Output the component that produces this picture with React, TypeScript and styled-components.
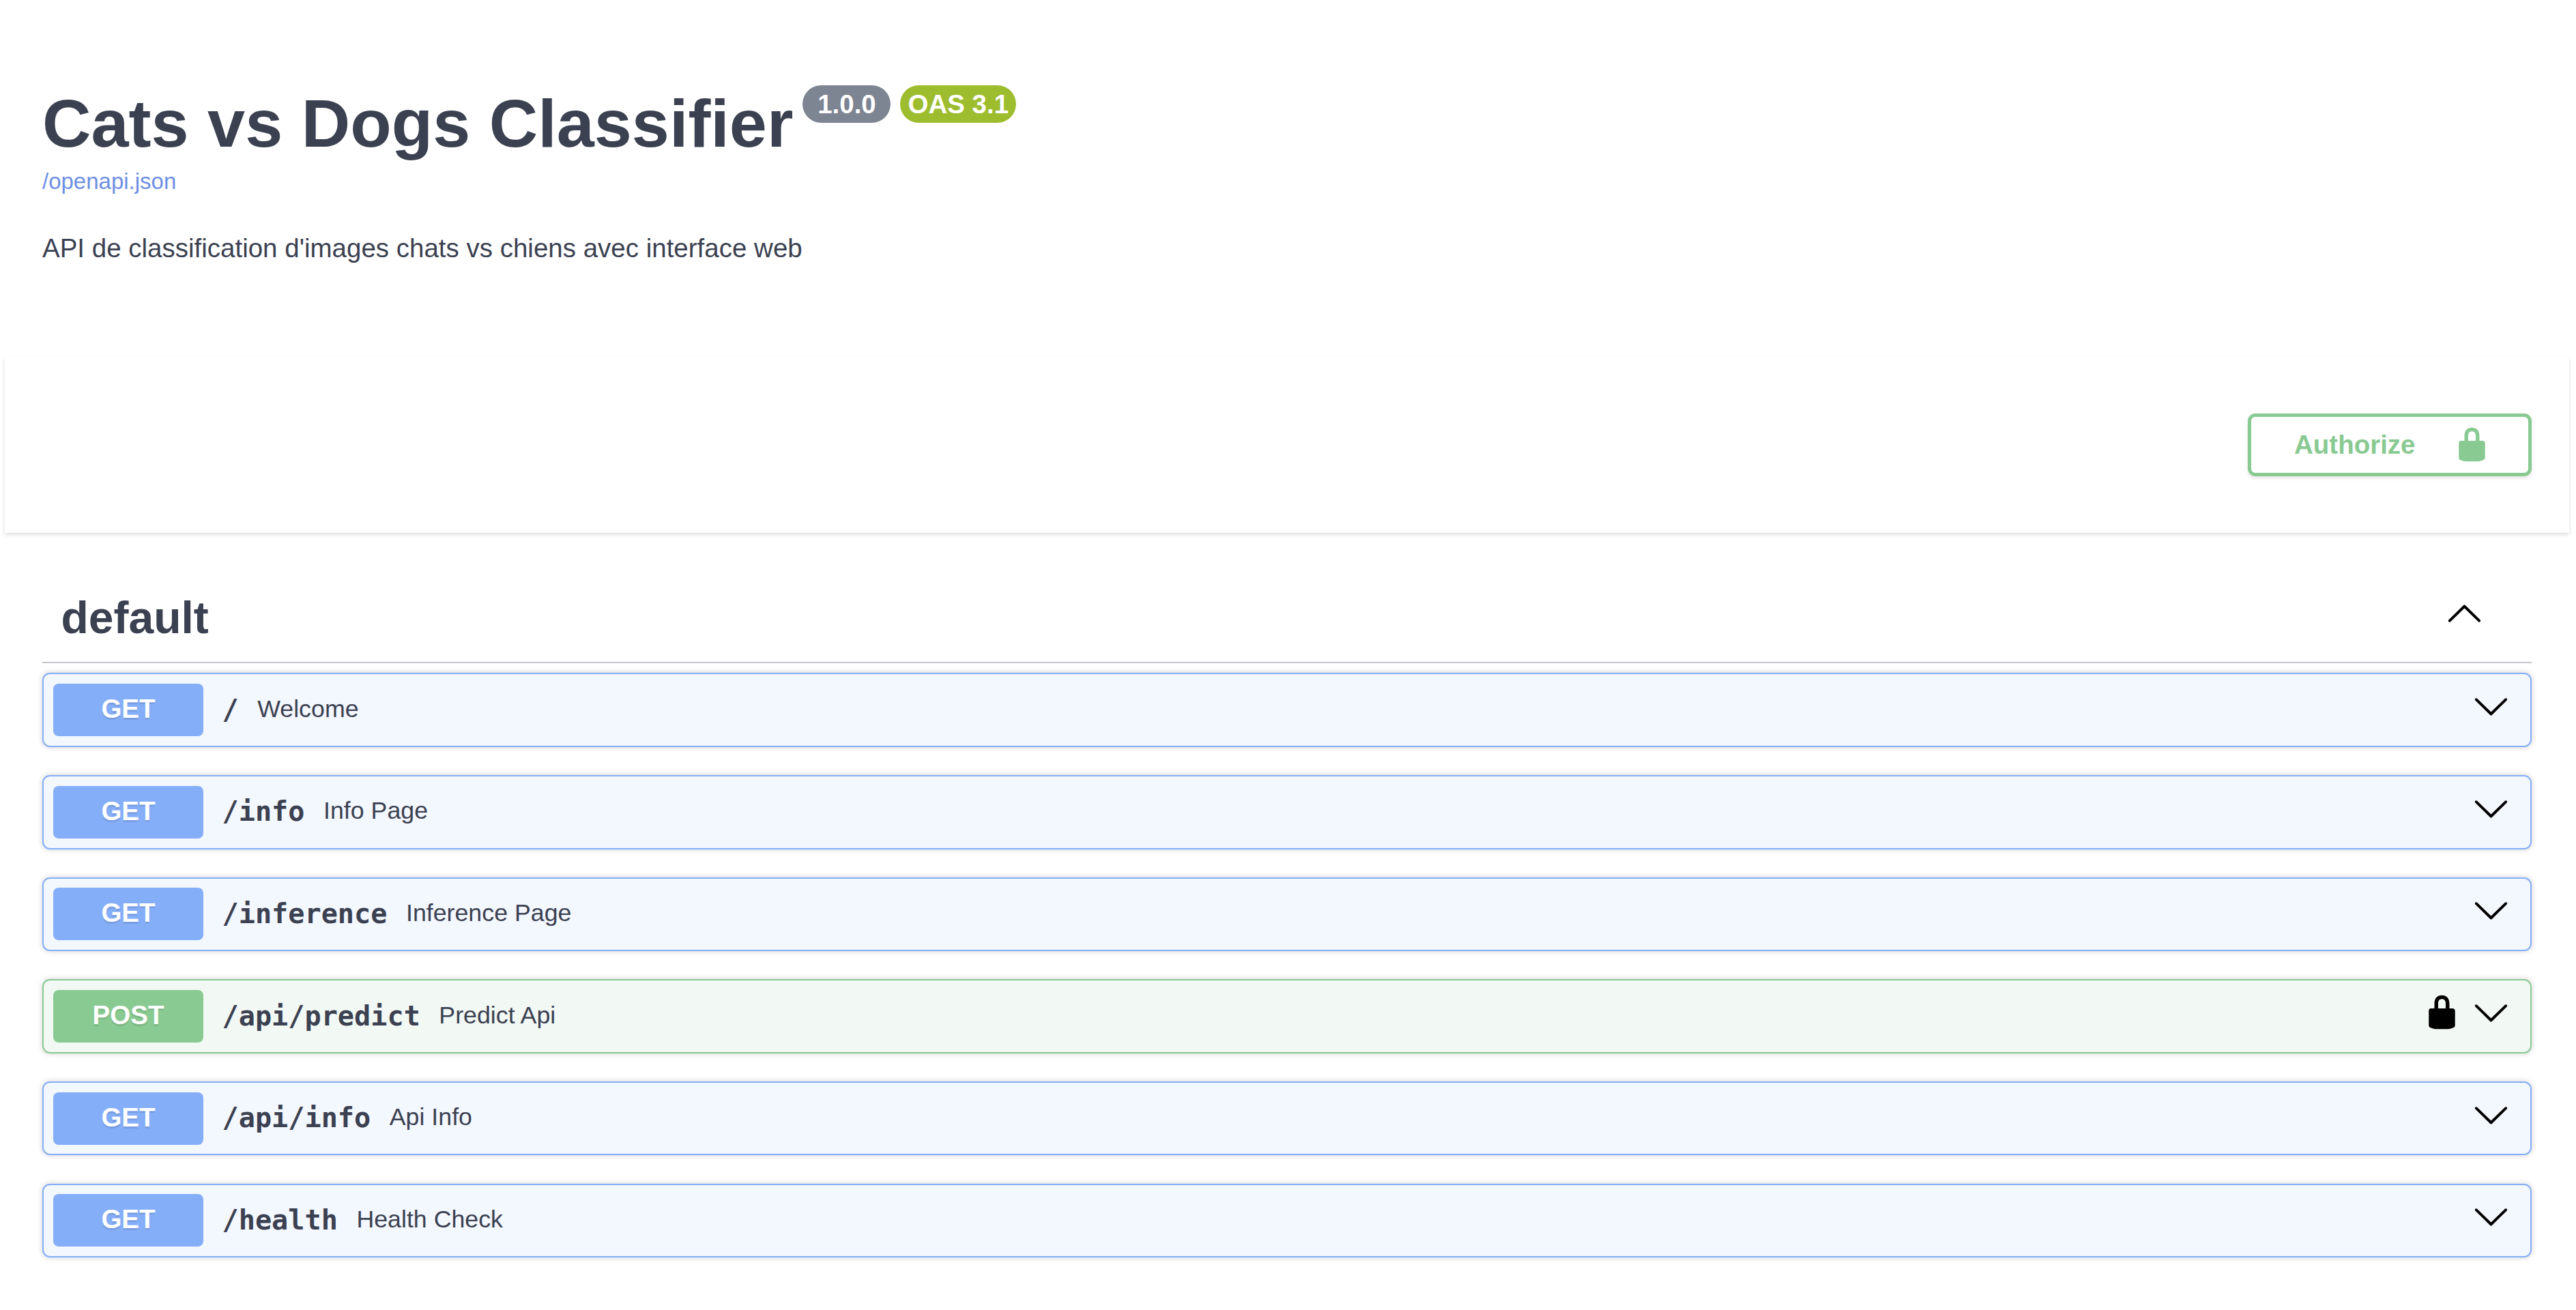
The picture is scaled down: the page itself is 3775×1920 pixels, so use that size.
import styled, { createGlobalStyle } from "styled-components";

const GlobalStyle = createGlobalStyle`
  html, body {
    margin: 0;
    background: #fff;
    font-family: "Liberation Sans", Arial, sans-serif;
    color: #3b4151;
  }
`;

const METHOD_COLORS = {
  GET: { main: "#85aef8", tint: "#f3f7fe" },
  POST: { main: "#89ca92", tint: "#f2f8f4" },
};

type Method = keyof typeof METHOD_COLORS;

const Page = styled.div`
  padding: 0 10px 0 7px;
`;

const Info = styled.header`
  padding: 125px 55px 137px;
`;

const TitleRow = styled.div`
  display: flex;
  align-items: flex-start;
`;

const Title = styled.h1`
  margin: -1px 0 0;
  font-size: 99px;
  line-height: 114px;
  font-weight: 700;
  color: #3b4151;
`;

const Stamp = styled.span<{ $color: string; $wide?: boolean }>`
  height: 55px;
  margin-left: 14px;
  padding: 0 ${(props) => (props.$wide ? "21.7px" : "11px")};
  border-radius: 28px;
  background: ${(props) => props.$color};
  color: #fff;
  font-size: 38.5px;
  font-weight: 700;
  line-height: 55px;
  white-space: nowrap;
`;

const SpecLink = styled.a`
  display: block;
  margin-top: 8.6px;
  font-size: 33px;
  line-height: 38px;
  color: #6e8fe3;
  text-decoration: none;
`;

const Description = styled.p`
  margin: 57.4px 0 0;
  font-size: 38.5px;
  line-height: 44px;
  color: #3b4151;
`;

const SchemeBand = styled.section`
  display: flex;
  justify-content: flex-end;
  padding: 83px 55px;
  background: #fff;
  box-shadow: 0 2.75px 5.5px 0 rgba(0, 0, 0, 0.15);
`;

const AuthorizeButton = styled.button`
  display: flex;
  align-items: center;
  box-sizing: border-box;
  width: 416px;
  height: 92px;
  padding: 0 0 0 63px;
  border: 5.5px solid #89ca92;
  border-radius: 11px;
  background: transparent;
  box-shadow: 0 2.75px 5.5px rgba(0, 0, 0, 0.1);
  color: #89ca92;
  font-family: inherit;
  font-size: 38.5px;
  font-weight: 700;
`;

const AuthorizeLabel = styled.span`
  margin-right: 55px;
`;

const Operations = styled.main`
  padding: 86px 55px 0;
`;

const SectionHeader = styled.div`
  display: flex;
  align-items: center;
  justify-content: space-between;
  padding: 0 71px 27.5px 27.5px;
  border-bottom: 2.75px solid #c5c6ca;
  margin-bottom: 14px;
`;

const SectionTitle = styled.h2`
  margin: 0;
  font-size: 66px;
  line-height: 76px;
  font-weight: 700;
  color: #3b4151;
`;

const CollapseIcon = styled.svg`
  display: block;
  width: 55px;
  height: 55px;
  margin-bottom: 9px;
  transform: rotate(180deg);
`;

const Row = styled.div<{ $method: Method }>`
  display: flex;
  align-items: center;
  box-sizing: border-box;
  height: 108.4px;
  margin-bottom: 41.25px;
  padding: 0 30px 0 14px;
  border: 2px solid ${(props) => METHOD_COLORS[props.$method].main};
  border-radius: 11px;
  background: ${(props) => METHOD_COLORS[props.$method].tint};
  box-shadow: 0 0 8px rgba(0, 0, 0, 0.19);
`;

const MethodBadge = styled.span<{ $method: Method }>`
  flex: none;
  width: 220px;
  height: 77px;
  border-radius: 8px;
  background: ${(props) => METHOD_COLORS[props.$method].main};
  color: #fff;
  font-size: 38.5px;
  font-weight: 700;
  line-height: 74px;
  text-align: center;
  text-shadow: 0 2.75px 0 rgba(0, 0, 0, 0.1);
`;

const Path = styled.span`
  margin: 0 0 2px 27.5px;
  font-family: "DejaVu Sans Mono", monospace;
  font-size: 40.2px;
  font-weight: 700;
  color: #3b4151;
`;

const Summary = styled.span`
  flex: 1;
  margin: 0 0 3px 27.5px;
  font-size: 35.75px;
  color: #3b4151;
`;

const RowIcon = styled.svg<{ $gap?: boolean }>`
  flex: none;
  width: 55px;
  height: 55px;
  margin-bottom: 12px;
  margin-right: ${(props) => (props.$gap ? "17px" : "0")};
`;

const LOCK_PATH =
  "M15.8 8H14V5.6C14 2.703 12.665 1 10 1 7.334 1 6 2.703 6 5.6V8H4c-.553 0-1 .646-1 1.199V17c0 .549.428 1.139.951 1.307l1.197.387C5.672 18.861 6.55 19 7.1 19h5.8c.549 0 1.428-.139 1.951-.307l1.196-.387c.524-.167.953-.757.953-1.306V9.199C17 8.646 16.352 8 15.8 8zM12 8H8V5.199C8 3.754 8.797 3 10 3c1.203 0 2 .754 2 2.199V8z";

const ARROW_PATH =
  "M17.418 6.109c.272-.268.709-.268.979 0s.271.701 0 .969l-7.908 7.83c-.27.268-.707.268-.979 0l-7.908-7.83c-.27-.268-.27-.701 0-.969.271-.268.709-.268.979 0L10 13.25l7.418-7.141z";

const routes: { method: Method; path: string; summary: string; locked?: boolean }[] = [
  { method: "GET", path: "/", summary: "Welcome" },
  { method: "GET", path: "/info", summary: "Info Page" },
  { method: "GET", path: "/inference", summary: "Inference Page" },
  { method: "POST", path: "/api/predict", summary: "Predict Api", locked: true },
  { method: "GET", path: "/api/info", summary: "Api Info" },
  { method: "GET", path: "/health", summary: "Health Check" },
];

const App = () => {
  return (
    <Page>
      <GlobalStyle />
      <Info>
        <TitleRow>
          <Title>Cats vs Dogs Classifier</Title>
          <Stamp $color="#7d8492" $wide>
            1.0.0
          </Stamp>
          <Stamp $color="#9dbd2e">OAS 3.1</Stamp>
        </TitleRow>
        <SpecLink href="#">/openapi.json</SpecLink>
        <Description>
          API de classification d'images chats vs chiens avec interface web
        </Description>
      </Info>

      <SchemeBand>
        <AuthorizeButton>
          <AuthorizeLabel>Authorize</AuthorizeLabel>
          <svg width="55" height="55" viewBox="0 0 20 20" fill="#89ca92">
            <path d={LOCK_PATH} fillRule="evenodd" />
          </svg>
        </AuthorizeButton>
      </SchemeBand>

      <Operations>
        <SectionHeader>
          <SectionTitle>default</SectionTitle>
          <CollapseIcon viewBox="0 0 20 20">
            <path d={ARROW_PATH} />
          </CollapseIcon>
        </SectionHeader>
        {routes.map((route) => (
          <Row key={route.path} $method={route.method}>
            <MethodBadge $method={route.method}>{route.method}</MethodBadge>
            <Path>{route.path}</Path>
            <Summary>{route.summary}</Summary>
            {route.locked && (
              <RowIcon $gap viewBox="0 0 20 20">
                <path d={LOCK_PATH} fillRule="evenodd" />
              </RowIcon>
            )}
            <RowIcon viewBox="0 0 20 20">
              <path d={ARROW_PATH} />
            </RowIcon>
          </Row>
        ))}
      </Operations>
    </Page>
  );
};

export default App;
